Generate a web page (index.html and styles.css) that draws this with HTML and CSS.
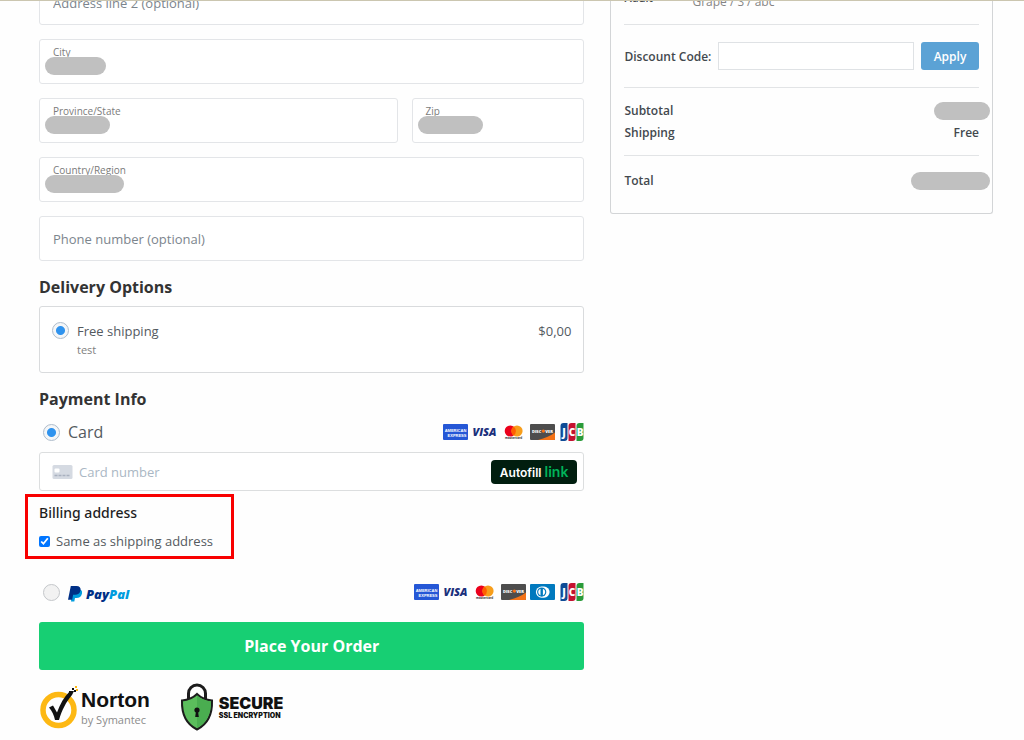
FILE: index.html
```html
<!DOCTYPE html>
<html lang="en">
<head>
    <meta charset="UTF-8">
    <meta name="viewport" content="width=device-width, initial-scale=1.0">
    <title>Checkout</title>
    <link rel="stylesheet" href="styles.css">
</head>
<body>

<div class="page">
    <form class="checkout">
        <main class="main-column">
            <div class="fields">
                <div class="field">
                    <input type="text" placeholder="Address line 2 (optional)" aria-label="Address line 2">
                </div>
                <div class="field">
                    <label for="city">City</label>
                    <input type="text" id="city">
                    <span class="mask mask-field mask-small"></span>
                </div>
                <div class="field-row">
                    <div class="field">
                        <label for="state">Province/State</label>
                        <input type="text" id="state">
                        <span class="mask mask-field mask-medium"></span>
                    </div>
                    <div class="field">
                        <label for="zip">Zip</label>
                        <input type="text" id="zip">
                        <span class="mask mask-field mask-medium"></span>
                    </div>
                </div>
                <div class="field">
                    <label for="country">Country/Region</label>
                    <input type="text" id="country">
                    <span class="mask mask-field mask-large"></span>
                </div>
                <div class="field">
                    <input type="tel" placeholder="Phone number (optional)" aria-label="Phone number">
                </div>
            </div>

            <h2>Delivery Options</h2>
            <div class="delivery">
                <input type="radio" name="delivery" id="free-shipping" class="radio" checked>
                <label for="free-shipping">Free shipping <small>test</small></label>
                <span class="delivery-price">$0,00</span>
            </div>

            <h2>Payment Info</h2>
            <div class="method">
                <input type="radio" name="payment" id="pay-card" class="radio" checked>
                <label for="pay-card">Card</label>
                <div class="brands">
                    <!-- American Express -->
                    <svg viewBox="0 0 25 18">
                        <rect y="1" width="25" height="16" rx="1" fill="#2557d6"/>
                        <text x="12.5" y="8.5" text-anchor="middle" class="amex-text">AMERICAN</text>
                        <text x="14" y="14" text-anchor="middle" class="amex-text">EXPRESS</text>
                    </svg>
                    <!-- Visa -->
                    <svg viewBox="0 0 25 18">
                        <text x="12.5" y="13" text-anchor="middle" class="visa-text">VISA</text>
                    </svg>
                    <!-- Mastercard -->
                    <svg viewBox="0 0 25 18">
                        <circle cx="9.3" cy="8" r="5.6" fill="#eb001b"/>
                        <circle cx="16" cy="8" r="5.6" fill="#f79e1b"/>
                        <path d="M12.65 3.5a5.6 5.6 0 0 1 0 9a5.6 5.6 0 0 1 0-9z" fill="#ff5f00"/>
                        <text x="12.6" y="16.4" text-anchor="middle" class="mc-text">mastercard</text>
                    </svg>
                    <!-- Discover -->
                    <svg viewBox="0 0 25 18">
                        <rect y="1" width="25" height="16" rx="1" fill="#4d4d4d"/>
                        <path d="M25 9.5V16a1 1 0 0 1-1 1H8C15 15.5 21 12.5 25 9.5z" fill="#f47216"/>
                        <text x="2" y="9.7" class="discover-text">DISC</text>
                        <circle cx="13.4" cy="8.1" r="1.7" fill="#f47216"/>
                        <text x="15.2" y="9.7" class="discover-text">VER</text>
                    </svg>
                    <!-- JCB -->
                    <svg viewBox="0 0 25 18">
                        <path d="M4.5 0H8.5v15a3 3 0 0 1-3 3H1.5V3a3 3 0 0 1 3-3z" fill="#0e4c96"/>
                        <path d="M12.5 0H16.5v15a3 3 0 0 1-3 3H9.5V3a3 3 0 0 1 3-3z" fill="#c41230"/>
                        <path d="M20.5 0H24.5v15a3 3 0 0 1-3 3h-4V3a3 3 0 0 1 3-3z" fill="#2a9b3a"/>
                        <text x="5" y="12.6" text-anchor="middle" class="jcb-text">J</text>
                        <text x="13" y="12.6" text-anchor="middle" class="jcb-text">C</text>
                        <text x="21" y="12.6" text-anchor="middle" class="jcb-text">B</text>
                    </svg>
                </div>
            </div>
            <div class="card-box">
                <svg class="card-icon" viewBox="0 0 20 14">
                    <rect width="20" height="14" rx="1.5" fill="#d5dae2"/>
                    <rect x="2" y="3.5" width="5" height="4" rx="1" fill="#fff"/>
                    <path d="M2 10.5h16" stroke="#a9b1bf" stroke-width="1.5" stroke-dasharray="3 1"/>
                </svg>
                <input type="text" placeholder="Card number" aria-label="Card number">
                <button type="button" class="autofill">Autofill <span>link</span></button>
            </div>

            <section class="billing">
                <h3>Billing address</h3>
                <div class="same-address">
                    <input type="checkbox" id="same" checked>
                    <label for="same">Same as shipping address</label>
                </div>
            </section>

            <div class="method">
                <input type="radio" name="payment" id="pay-paypal" class="radio">
                <label for="pay-paypal">
                    <svg class="paypal" viewBox="0 0 64 22" role="img" aria-label="PayPal">
                        <path d="M4.5 8h5.5c3 0 4.5 1.7 4 4.5-.6 3.2-2.7 4.4-5.6 4.4H7l-.7 3.6H3z" fill="#009cde"/>
                        <path d="M2.8 5h5.7c3 0 4.5 1.6 4 4.4-.6 3-2.6 4.3-5.5 4.3H5.1l-.9 5H0z" fill="#003087"/>
                        <text x="18" y="18" class="paypal-text"><tspan fill="#003087">Pay</tspan><tspan fill="#009cde">Pal</tspan></text>
                    </svg>
                </label>
                <div class="brands">
                    <!-- American Express -->
                    <svg viewBox="0 0 25 18">
                        <rect y="1" width="25" height="16" rx="1" fill="#2557d6"/>
                        <text x="12.5" y="8.5" text-anchor="middle" class="amex-text">AMERICAN</text>
                        <text x="14" y="14" text-anchor="middle" class="amex-text">EXPRESS</text>
                    </svg>
                    <!-- Visa -->
                    <svg viewBox="0 0 25 18">
                        <text x="12.5" y="13" text-anchor="middle" class="visa-text">VISA</text>
                    </svg>
                    <!-- Mastercard -->
                    <svg viewBox="0 0 25 18">
                        <circle cx="9.3" cy="8" r="5.6" fill="#eb001b"/>
                        <circle cx="16" cy="8" r="5.6" fill="#f79e1b"/>
                        <path d="M12.65 3.5a5.6 5.6 0 0 1 0 9a5.6 5.6 0 0 1 0-9z" fill="#ff5f00"/>
                        <text x="12.6" y="16.4" text-anchor="middle" class="mc-text">mastercard</text>
                    </svg>
                    <!-- Discover -->
                    <svg viewBox="0 0 25 18">
                        <rect y="1" width="25" height="16" rx="1" fill="#4d4d4d"/>
                        <path d="M25 9.5V16a1 1 0 0 1-1 1H8C15 15.5 21 12.5 25 9.5z" fill="#f47216"/>
                        <text x="2" y="9.7" class="discover-text">DISC</text>
                        <circle cx="13.4" cy="8.1" r="1.7" fill="#f47216"/>
                        <text x="15.2" y="9.7" class="discover-text">VER</text>
                    </svg>
                    <!-- Diners Club -->
                    <svg viewBox="0 0 25 18">
                        <rect y="1" width="25" height="16" rx="1" fill="#0079be"/>
                        <path d="M11.5 3.5h2.5a5.6 5.6 0 0 1 0 11.2h-2.5a5.6 5.6 0 0 1 0-11.2z" fill="#fff"/>
                        <circle cx="11.7" cy="9.1" r="4.6" fill="#0079be"/>
                        <path d="M10.5 5.8a3.5 3.5 0 0 0 0 6.6zM12.9 5.8a3.5 3.5 0 0 1 0 6.6z" fill="#fff"/>
                    </svg>
                    <!-- JCB -->
                    <svg viewBox="0 0 25 18">
                        <path d="M4.5 0H8.5v15a3 3 0 0 1-3 3H1.5V3a3 3 0 0 1 3-3z" fill="#0e4c96"/>
                        <path d="M12.5 0H16.5v15a3 3 0 0 1-3 3H9.5V3a3 3 0 0 1 3-3z" fill="#c41230"/>
                        <path d="M20.5 0H24.5v15a3 3 0 0 1-3 3h-4V3a3 3 0 0 1 3-3z" fill="#2a9b3a"/>
                        <text x="5" y="12.6" text-anchor="middle" class="jcb-text">J</text>
                        <text x="13" y="12.6" text-anchor="middle" class="jcb-text">C</text>
                        <text x="21" y="12.6" text-anchor="middle" class="jcb-text">B</text>
                    </svg>
                </div>
            </div>

            <button type="submit" class="place-order">Place Your Order</button>

            <div class="badges">
                <div class="badge">
                    <svg class="norton-logo" viewBox="0 0 40 44">
                        <circle cx="19.5" cy="25" r="15.5" fill="none" stroke="#fdb813" stroke-width="5.5"/>
                        <path d="M10 22.5l4-2 4 7C21 19 25 12 31 6l4 0-2 4C27 17 23 25 20 35h-4c-1-5-3-9-6-12.5z" fill="#111"/>
                        <path d="M33 3h2v2h-2zM35 5h2v2h-2zM30 6h2v2h-2z" fill="#111"/>
                        <path d="M36 1h2v2h-2zM37 4h2v2h-2z" fill="#fdb813"/>
                    </svg>
                    <div class="norton-name"><b>Norton</b><span>by Symantec</span></div>
                </div>
                <div class="badge">
                    <svg class="shield" viewBox="0 0 34 48">
                        <path d="M8.5 16V10.5a8.5 8.5 0 0 1 17 0V16" fill="none" stroke="#1c1c1c" stroke-width="3"/>
                        <path d="M17 11c4 4 9 6 15 6.5C32.5 32 27 41.5 17 46.5 7 41.5 1.5 32 2 17.5 8 17 13 15 17 11z" fill="#5bbd5c" stroke="#1c1c1c" stroke-width="2"/>
                        <path d="M17 12.5c4 3.5 8.5 5.4 14 6C31 31 26.5 40 17 45.2z" fill="#4aad50"/>
                        <circle cx="17" cy="27" r="2.6" fill="#111"/>
                        <path d="M16 28h2l.8 6h-3.6z" fill="#111"/>
                    </svg>
                    <div class="secure-name"><b>SECURE</b><span>SSL ENCRYPTION</span></div>
                </div>
            </div>
        </main>

        <aside class="summary">
            <div class="line-item">
                <span class="item-name">Adult</span>
                <span class="item-variant">Grape / S / abc</span>
            </div>
            <div class="discount">
                <label for="discount">Discount Code:</label>
                <input type="text" id="discount">
                <button type="button">Apply</button>
            </div>
            <div class="totals">
                <div class="total-row"><span>Subtotal</span><span class="mask mask-amount mask-subtotal"></span></div>
                <div class="total-row"><span>Shipping</span><span>Free</span></div>
            </div>
            <div class="grand-total">
                <div class="total-row"><span>Total</span><span class="mask mask-amount mask-large"></span></div>
            </div>
        </aside>
    </form>
</div>

</body>
</html>
```
FILE: styles.css
```css
* {
    box-sizing: border-box;
}
body {
    margin: 0;
    font-family: "Open Sans", "Noto Sans", sans-serif;
    font-size: 13px;
    color: #545a5f;
    background-color: #fefefe;
}
input, button {
    font-family: inherit;
    font-size: inherit;
    color: inherit;
}
button {
    border: none;
    cursor: pointer;
}
.page {
    border-top: 1px solid #cbc6b0;
    overflow: hidden;
}
/* The form is scrolled a little past its first row */
.checkout {
    display: grid;
    grid-template-columns: 546fr 383fr;
    gap: 26px;
    align-items: start;
    margin-top: -21px;
    padding: 0 31px 0 39px;
}

/* Address fields */
.fields {
    display: grid;
    gap: 14px;
}
.field-row {
    display: grid;
    grid-template-columns: 359fr 173fr;
    gap: 14px;
}
.field {
    position: relative;
}
.field input {
    display: block;
    width: 100%;
    height: 45px;
    padding: 0 13px;
    border: 1px solid #e3e5e8;
    border-radius: 3px;
    background-color: #fff;
}
.field input::placeholder {
    color: #7c858d;
    opacity: 1;
}
.field label {
    position: absolute;
    top: 6px;
    left: 14px;
    font-size: 10px;
    line-height: 14px;
    color: #7b7b7b;
}
.mask {
    height: 18px;
    border-radius: 9px;
    background-color: #c0c0c0;
}
.mask-field {
    position: absolute;
    top: 18px;
    left: 6px;
}
.mask-small {
    width: 61px;
}
.mask-medium {
    width: 65px;
}
.mask-large {
    width: 79px;
}
.mask-subtotal {
    width: 56px;
}

h2 {
    margin: 15px 0 8px;
    font-size: 16px;
    line-height: 22px;
    font-weight: 700;
    color: #333;
}

/* Radio buttons */
.radio {
    appearance: none;
    flex: none;
    width: 17px;
    height: 17px;
    margin: 0;
    border: 1px solid #c4c7ca;
    border-radius: 50%;
    background-color: #f2f2f2;
}
.radio:checked {
    border-color: #aebccb;
    background: radial-gradient(circle, #2f93ee 4px, #f4f6f8 5px);
}

.delivery {
    display: flex;
    align-items: flex-start;
    gap: 8px;
    height: 67px;
    padding: 15px 12px;
    border: 1px solid #d9dbdd;
    border-radius: 3px;
    background-color: #fff;
}
.delivery label {
    flex: 1;
    line-height: 18px;
}
.delivery small {
    display: block;
    font-size: 11px;
    line-height: 20px;
    color: #808080;
}
.delivery-price {
    line-height: 18px;
}

/* Payment */
h2 + .method {
    margin-top: 10px;
}
.method {
    display: flex;
    align-items: center;
    gap: 8px;
    height: 24px;
    padding-left: 4px;
}
.method label {
    flex: 1;
    font-size: 16px;
    line-height: 24px;
}
.brands {
    display: flex;
    gap: 4px;
}
.brands svg {
    width: 25px;
    height: 18px;
}
.amex-text {
    font: 700 4px "Liberation Sans", sans-serif;
    fill: #fff;
}
.visa-text {
    font: italic 800 11px "Open Sans", sans-serif;
    fill: #1a2f7c;
}
.mc-text {
    font: 700 3px "Open Sans", sans-serif;
    fill: #333;
}
.discover-text {
    font: 800 4px "Open Sans", sans-serif;
    fill: #fff;
}
.jcb-text {
    font: 800 10px "Open Sans", sans-serif;
    fill: #fff;
}
.card-box {
    display: flex;
    align-items: center;
    height: 39px;
    margin-top: 8px;
    padding: 0 6px 0 12px;
    border: 1px solid #dcdedf;
    border-radius: 3px;
    background-color: #fff;
}
.card-icon {
    width: 21px;
    height: 14px;
}
.card-box input {
    flex: 1;
    min-width: 0;
    padding: 0 6px;
    border: none;
    background: none;
}
.card-box input::placeholder {
    color: #aab7c4;
    opacity: 1;
}
.autofill {
    height: 24px;
    padding: 0 9px;
    border-radius: 4px;
    background-color: #011e0f;
    font-family: Inter, sans-serif;
    font-size: 12px;
    font-weight: 600;
    color: #fff;
}
.autofill span {
    font-size: 14px;
    color: #00b35a;
}

.billing {
    width: 209px;
    height: 65px;
    margin: 3px 0 21px -14px;
    padding: 6px 11px;
    border: 3px solid #f80000;
}
.billing h3 {
    margin: 0;
    font-family: "Noto Sans", sans-serif;
    font-size: 14px;
    line-height: 20px;
    font-weight: 500;
    color: #1e1e1e;
}
.same-address {
    display: flex;
    align-items: center;
    gap: 6px;
    margin-top: 8px;
    line-height: 20px;
    white-space: nowrap;
}
.same-address input {
    width: 11px;
    height: 11px;
    margin: 0;
    accent-color: #0075ff;
}
.paypal {
    display: block;
    width: 64px;
    height: 22px;
}
.paypal-text {
    font: italic 800 13px "Open Sans", sans-serif;
}
.place-order {
    display: block;
    width: 100%;
    height: 48px;
    margin-top: 18px;
    border-radius: 3px;
    background-color: #17cf73;
    font-size: 16px;
    font-weight: 700;
    color: #fff;
}

/* Trust badges */
.badges {
    display: flex;
    gap: 30px;
    margin-top: 13px;
}
.badge {
    display: flex;
    align-items: center;
    gap: 5px;
}
.badge b, .badge span {
    display: block;
}
.norton-logo {
    width: 40px;
    height: 44px;
}
.norton-name {
    margin-left: -3px;
}
.norton-name b {
    font-family: "Liberation Sans", sans-serif;
    font-size: 21px;
    line-height: 24px;
    color: #111;
}
.norton-name span {
    font-size: 11px;
    line-height: 15px;
    color: #8c8c8c;
}
.shield {
    width: 34px;
    height: 48px;
}
.secure-name {
    font-family: Inter, sans-serif;
    color: #111;
}
.secure-name b {
    font-size: 16px;
    line-height: 16px;
    font-weight: 900;
}
.secure-name span {
    font-size: 7px;
    line-height: 9px;
    font-weight: 900;
}

/* Order summary */
.summary {
    padding: 0 13px 21px;
    border: 1px solid #d3d5d7;
    border-top: none;
    border-radius: 0 0 3px 3px;
    font-size: 12px;
    font-weight: 600;
    color: #43494e;
}
.line-item {
    display: flex;
    height: 45px;
    padding-top: 9px;
    border-bottom: 1px solid #e2e4e6;
}
.item-name {
    width: 68px;
    font-size: 11px;
    line-height: 18px;
}
.item-variant {
    font-weight: 400;
    line-height: 26px;
    color: #858585;
}
.discount {
    display: flex;
    align-items: center;
    gap: 7px;
    padding: 17px 0;
    border-bottom: 1px solid #e2e4e6;
}
.discount label {
    white-space: nowrap;
}
.discount input {
    flex: 1;
    min-width: 0;
    height: 28px;
    border: 1px solid #dfe2e5;
    background-color: #fff;
}
.discount button {
    width: 58px;
    height: 28px;
    border-radius: 3px;
    background-color: #5ba2d5;
    font-weight: 600;
    color: #fff;
}
.totals {
    padding: 12px 0 11px;
    border-bottom: 1px solid #e2e4e6;
}
.grand-total {
    padding-top: 14px;
}
.total-row {
    display: flex;
    align-items: center;
    justify-content: space-between;
    line-height: 22px;
}
.mask-amount {
    margin-right: -11px;
}
```
